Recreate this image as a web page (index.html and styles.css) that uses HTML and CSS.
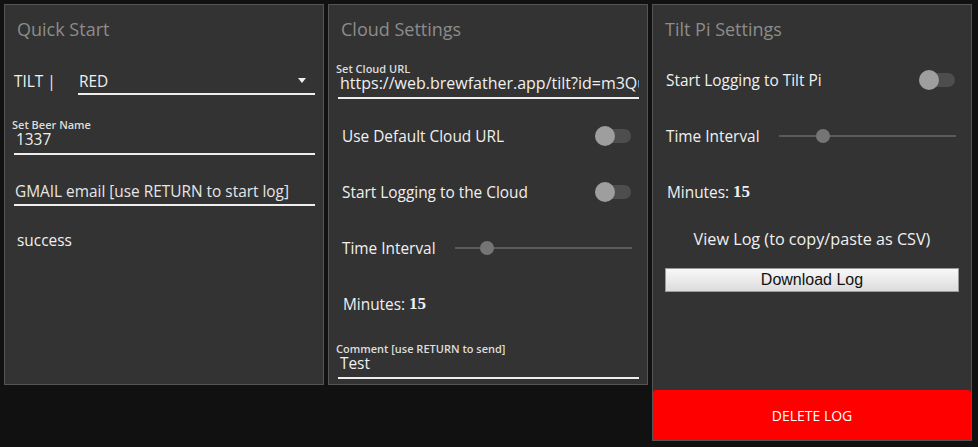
FILE: index.html
```html
<!DOCTYPE html>
<html lang="en">
<head>
<meta charset="utf-8">
<title>Tilt Dashboard</title>
<link rel="stylesheet" href="styles.css">
</head>
<body>
<main class="dash">
  <section class="panel panel-short">
    <h2 class="title">Quick Start</h2>
    <div class="row select-row">
      <span class="sel-label">TILT |</span>
      <div class="select">
        <span class="sel-value">RED</span>
        <span class="caret"></span>
      </div>
    </div>
    <div class="row field">
      <div class="field-box">
        <span class="f-label">Set Beer Name</span>
        <span class="f-value">1337</span>
      </div>
    </div>
    <div class="row field">
      <div class="field-box field-plain">
        <span class="f-value">GMAIL email [use RETURN to start log]</span>
      </div>
    </div>
    <div class="row text-row">success</div>
  </section>

  <section class="panel panel-short">
    <h2 class="title">Cloud Settings</h2>
    <div class="row field">
      <div class="field-box field-url">
        <span class="f-label">Set Cloud URL</span>
        <span class="f-value">https://web.brewfather.app/tilt?id=m3QuyXk9aLpT2w</span>
      </div>
    </div>
    <div class="row switch-row">
      <span class="s-label">Use Default Cloud URL</span>
      <span class="switch"><span class="knob"></span></span>
    </div>
    <div class="row switch-row">
      <span class="s-label">Start Logging to the Cloud</span>
      <span class="switch"><span class="knob"></span></span>
    </div>
    <div class="row slider-row">
      <span class="sl-label">Time Interval</span>
      <span class="slider"><span class="thumb" style="left: 18%"></span></span>
    </div>
    <div class="row minutes-row">Minutes:&nbsp;<b class="num">15</b></div>
    <div class="row field field-last">
      <div class="field-box">
        <span class="f-label">Comment [use RETURN to send]</span>
        <span class="f-value">Test</span>
      </div>
    </div>
  </section>

  <section class="panel panel-tall">
    <h2 class="title">Tilt Pi Settings</h2>
    <div class="row switch-row">
      <span class="s-label">Start Logging to Tilt Pi</span>
      <span class="switch"><span class="knob"></span></span>
    </div>
    <div class="row slider-row">
      <span class="sl-label">Time Interval</span>
      <span class="slider"><span class="thumb" style="left: 25%"></span></span>
    </div>
    <div class="row minutes-row">Minutes:&nbsp;<b class="num">15</b></div>
    <div class="viewlog">View Log (to copy/paste as CSV)</div>
    <button class="dl-btn" type="button">Download Log</button>
    <button class="del-btn" type="button">DELETE LOG</button>
  </section>
</main>
</body>
</html>
```
FILE: styles.css
```css
* { box-sizing: border-box; }

html, body {
  margin: 0;
  background: #111111;
}

body {
  padding: 4px;
  font-family: "Open Sans", "Noto Sans", sans-serif;
  font-size: 15.4px;
  color: #f0f0f0;
}

.dash {
  display: flex;
  align-items: flex-start;
  gap: 4px;
}

.panel {
  width: 320px;
  background: #333333;
  border: 1px solid #555555;
  display: flex;
  flex-direction: column;
}

.panel-short { height: 381px; }
.panel-tall { height: 437px; }

.title {
  margin: 0;
  height: 47px;
  padding: 12px 12px 0;
  font-size: 18px;
  font-weight: 400;
  line-height: 24px;
  color: #8c8c8c;
}

.row {
  height: 56px;
  flex: none;
}

/* select */
.select-row {
  display: flex;
  padding: 0 8px 0 9px;
}
.sel-label {
  width: 64px;
  padding-top: 20px;
  line-height: 20px;
}
.select {
  flex: 1;
  height: 43px;
  border-bottom: 2px solid #eeeeee;
  display: flex;
  align-items: flex-start;
  justify-content: space-between;
  padding: 20px 0 0 1px;
  line-height: 20px;
}
.caret {
  width: 0;
  height: 0;
  margin: 6px 9px 0 0;
  border-left: 4px solid transparent;
  border-right: 4px solid transparent;
  border-top: 5px solid #eeeeee;
}

/* text fields */
.field { padding: 0 8px 0 9px; }
.field-box {
  height: 47px;
  border-bottom: 2px solid #eeeeee;
  display: flex;
  flex-direction: column;
  padding-top: 10px;
}
.f-label {
  font-size: 11px;
  font-weight: 600;
  line-height: 14px;
  color: #dddddd;
  margin-left: -2px;
  white-space: nowrap;
}
.f-value {
  line-height: 20px;
  margin-top: -2px;
  padding-left: 2px;
  white-space: nowrap;
  overflow: hidden;
}
.field-plain {
  height: 42px;
  padding-top: 18px;
}
.field-plain .f-value {
  margin-top: 0;
  padding-left: 1px;
  color: #e6e6e6;
}
.field-url .f-value {
  margin-top: -3px;
  font-size: 16px;
}
.field-last { height: 52px; }

.text-row {
  padding: 11px 12px 0;
  line-height: 20px;
}

/* switches */
.switch-row {
  display: flex;
  align-items: center;
  justify-content: space-between;
  padding: 0 16px 0 13px;
}
.switch {
  position: relative;
  width: 36px;
  height: 14px;
  border-radius: 7px;
  background: #4d4d4d;
}
.knob {
  position: absolute;
  left: 0;
  top: -3px;
  width: 20px;
  height: 20px;
  border-radius: 50%;
  background: #9e9e9e;
}

/* sliders */
.slider-row {
  display: flex;
  align-items: center;
  padding: 0 15px 0 13px;
}
.sl-label { width: 113px; }
.slider {
  position: relative;
  flex: 1;
  height: 2px;
  background: #5a5a5a;
}
.thumb {
  position: absolute;
  top: -6px;
  width: 14px;
  height: 14px;
  margin-left: -7px;
  border-radius: 50%;
  background: #757575;
}

.minutes-row {
  display: flex;
  align-items: center;
  padding: 0 14px;
}
.num {
  font-family: "Liberation Serif", serif;
  font-size: 17px;
  font-weight: 700;
}

/* log */
.viewlog {
  height: 38px;
  display: flex;
  align-items: center;
  justify-content: center;
  font-size: 16.2px;
}
.dl-btn {
  margin: 10px 12px 0;
  height: 24px;
  border: 1px solid #9a9a9a;
  background: linear-gradient(#f8f8f8, #dcdcdc);
  font-family: "Liberation Sans", Arial, sans-serif;
  font-size: 16px;
  color: #111111;
  padding: 0;
}
.del-btn {
  margin-top: auto;
  height: 50px;
  border: none;
  border-radius: 3px 3px 0 0;
  background: #ff0000;
  color: #ffffff;
  font-family: "Open Sans", "Noto Sans", sans-serif;
  font-size: 14px;
  padding: 0;
}
```
